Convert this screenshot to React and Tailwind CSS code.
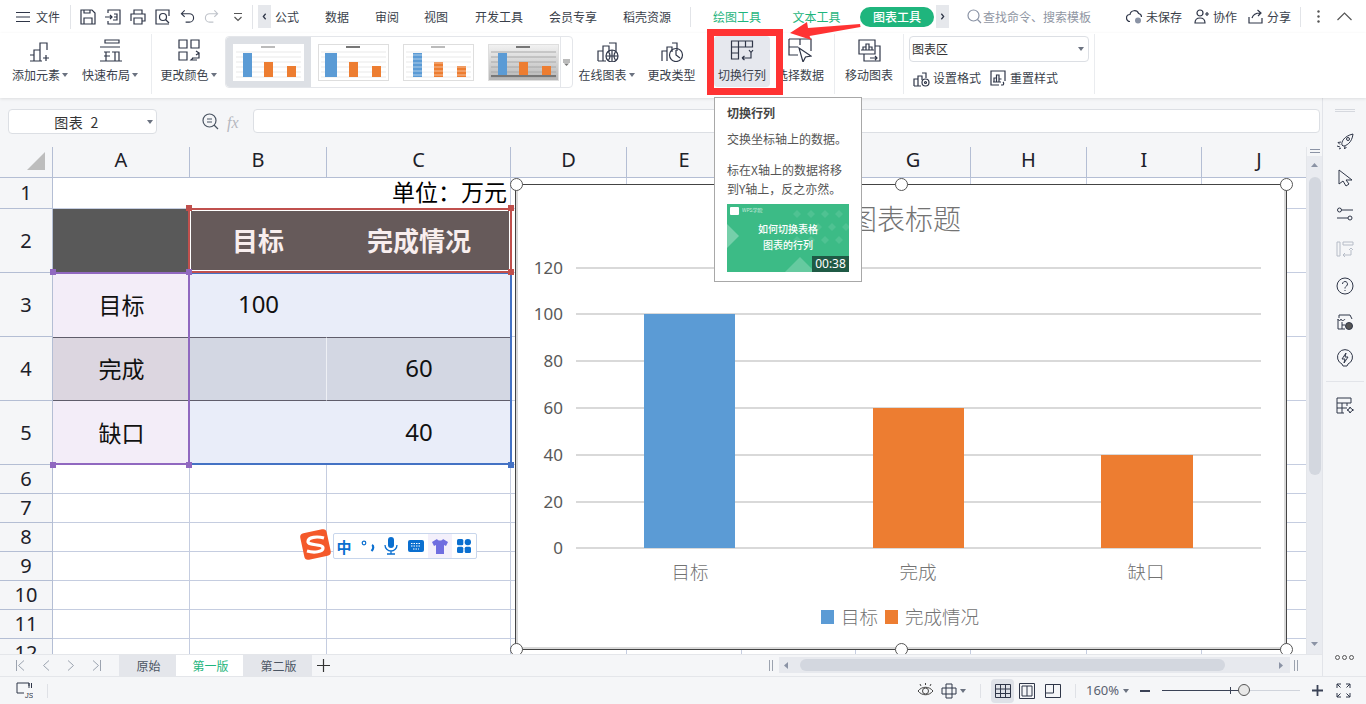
import React from "react";

const I = ({ s = 24, w, h, c = "#2f3648", sw = 1.2, vb = "0 0 24 24", children, cls = "" }) => (
  <svg width={w || s} height={h || s} viewBox={vb} fill="none" stroke={c} strokeWidth={sw} className={"shrink-0 " + cls}>{children}</svg>
);

const Caret = ({ c = "#6b7280" }) => (
  <svg width="6" height="4" viewBox="0 0 6 4" className="shrink-0"><path d="M0 0h6L3 4z" fill={c} /></svg>
);

const Tab = ({ w, children, cls = "text-[#3a3f4b]" }) => (
  <div className={"flex items-center justify-center text-xs shrink-0 " + cls} style={{ width: w }}>{children}</div>
);

const Sep = ({ h = "h-[60px]" }) => <div className={"w-px bg-[#eaecef] shrink-0 " + h} />;

const RibbonBtn = ({ w, label, caret, icon, active }) => (
  <div className={"flex flex-col items-center shrink-0 h-[51px] mt-[3px] rounded-sm " + (active ? "bg-[#e6e8ee]" : "")} style={{ width: w }}>
    <div className="h-[26px] flex items-end justify-center">{icon}</div>
    <div className="mt-[6px] flex items-center gap-[2px] text-xs text-[#3a3f4b] whitespace-nowrap leading-[14px]">
      {label}{caret && <Caret />}
    </div>
  </div>
);

const Thumb = ({ variant }) => {
  const gray = variant === 3;
  const blue = "#5b9bd5", or = "#ed7d31";
  return (
    <svg width="71" height="37" viewBox="0 0 71 37" className="shrink-0">
      <defs>
        <linearGradient id="tg" x1="0" y1="0" x2="0" y2="1"><stop offset="0" stopColor="#f2f2f2" /><stop offset="1" stopColor="#b5b5b5" /></linearGradient>
      </defs>
      <rect x="0.5" y="0.5" width="70" height="36" fill={gray ? "url(#tg)" : "#fff"} stroke={variant === 0 ? "#fff" : "#dedede"} />
      <rect x="28" y="2" width="14" height="2" fill={gray || variant === 1 ? "#777" : "#bbb"} />
      {[8, 13, 18, 23, 28, 33].map((y) => <line key={y} x1="3" x2="68" y1={y} y2={y} stroke={gray ? "#a8a8a8" : "#e9e9e9"} />)}
      <rect x={variant === 1 ? 7 : 10} y="9" width={variant === 1 ? 12 : 9} height="24" fill={blue} />
      <rect x="31" y="18" width="9" height="15" fill={or} />
      <rect x="54" y="22" width="9" height="11" fill={or} />
      {variant === 2 && [11, 15, 19, 23, 27, 31].map((y) => <line key={y} x1="8" x2="64" y1={y} y2={y} stroke="#fff" strokeOpacity=".5" />)}
      {gray && <rect x="3" y="31" width="65" height="2" fill="#777" />}
    </svg>
  );
};

const COLS = "grid-cols-[53px_137px_137px_184px_116px_115px_114px_115px_116px_115px_115px]";
const line = "border-r border-b border-[#c5cde0]";
const hdr = "bg-[#f5f6f8] flex items-center justify-center text-[20px] text-[#1d2129] font-['Noto_Sans',sans-serif] border-r border-b border-[#b4bed4] leading-none";

const Handle = ({ x, y }) => (
  <div className="absolute w-[13px] h-[13px] rounded-full bg-white border border-[#555]" style={{ left: x - 6, top: y - 6 }} />
);
const Sq = ({ x, y, c }) => (
  <div className="absolute w-[6px] h-[6px]" style={{ left: x - 3, top: y - 3, background: c }} />
);

const Empty = ({ n }) => Array.from({ length: 10 }).map((_, i) => <div key={n + "-" + i} className={line} />);

export default function App() {
  const t = 147;
  return (
    <div className="relative w-[1366px] h-[704px] overflow-hidden bg-[#f5f6f8] flex flex-col font-['Noto_Sans_CJK_SC','Noto_Sans',sans-serif]">
      {/* title row */}
      <div className="h-[33px] bg-white flex items-center shrink-0">
        <div className="w-[16px]" />
        <I s={14} vb="0 0 14 14"><path d="M0 2.5h14M0 7h14M0 11.5h14" /></I>
        <span className="ml-[6px] text-xs text-[#3a3f4b] w-[24px]">文件</span>
        <div className="w-px h-[24px] bg-[#e2e4e8] ml-[10px] mr-[9px]" />
        <div className="flex items-center w-[172px] gap-[9px]">
          <I s={16} vb="0 0 16 16"><path d="M1 1h11l3 3v11H1zM4 15V9h8v6M4 1v3h6V1" /></I>
          <I s={16} vb="0 0 16 16"><path d="M3 4V1h12v14H3v-3M0 8h7M5 6l2 2-2 2M9 5h3v3H9M12 8v3H8" /></I>
          <I s={16} vb="0 0 16 16"><path d="M4 5V1h8v4M1 12V5h14v7h-3M4 9h8v6H4z" /></I>
          <I s={16} vb="0 0 16 16"><path d="M14 15H1V1h13v6" /><circle cx="8" cy="8" r="3.5" /><path d="M10.5 10.5L14 14" /></I>
          <I s={15} vb="0 0 16 16"><path d="M2 5h8a4.5 4.5 0 0 1 0 9H6M5 1.5L1.5 5 5 8.5" /></I>
          <I s={15} vb="0 0 16 16" c="#bfc3ca"><path d="M14 5H6a4.5 4.5 0 0 0 0 9h4M11 1.5L14.5 5 11 8.5" /></I>
          <I s={10} vb="0 0 10 10" c="#555" cls="ml-[5px]"><path d="M1 1.5h8M1.5 5L5 8.5 8.5 5" /></I>
        </div>
        <div className="w-px h-[24px] bg-[#e2e4e8] mr-[5px]" />
        <div className="w-[13px] h-[23px] bg-[#e6e8ec] flex items-center justify-center">
          <I s={7} vb="0 0 7 9" sw={1.6}><path d="M5 1L2 4.5 5 8" /></I>
        </div>
        <Tab w={32}>公式</Tab>
        <Tab w={50} cls="text-[#3a3f4b] ml-[9px]">数据</Tab>
        <Tab w={50}>审阅</Tab>
        <Tab w={48}>视图</Tab>
        <Tab w={78}>开发工具</Tab>
        <Tab w={70}>会员专享</Tab>
        <Tab w={78}>稻壳资源</Tab>
        <div className="w-px h-[20px] bg-[#e2e4e8] ml-[4px]" />
        <Tab w={92} cls="text-[#1fb57d]">绘图工具</Tab>
        <Tab w={67} cls="text-[#1fb57d]">文本工具</Tab>
        <div className="w-[74px] h-[20px] ml-[10px] rounded-full bg-[#1fb57d] text-white text-xs flex items-center justify-center font-medium">图表工具</div>
        <div className="w-[13px] h-[23px] ml-[2px] bg-[#e6e8ec] flex items-center justify-center">
          <I s={7} vb="0 0 7 9" sw={1.6}><path d="M2 1l3 3.5L2 8" /></I>
        </div>
        <I s={15} vb="0 0 15 15" c="#8a93a5" cls="ml-[18px]"><circle cx="6.5" cy="6.5" r="5.5" /><path d="M10.5 10.5L14 14" /></I>
        <span className="text-xs text-[#9096a3] ml-px w-[109px] whitespace-nowrap">查找命令、搜索模板</span>
        <I s={17} vb="0 0 17 17" cls="ml-[34px]"><path d="M4 13.5a3.5 3.5 0 0 1 0-7 4.5 4.5 0 0 1 8.6-1A3.5 3.5 0 0 1 15.5 9" /><circle cx="12" cy="12.5" r="3" fill="#8a93a5" stroke="none" /></I>
        <span className="text-xs text-[#3a3f4b] ml-[3px] w-[36px]">未保存</span>
        <I s={15} vb="0 0 15 15" cls="ml-[12px]"><circle cx="6" cy="4" r="3" /><path d="M1 14c0-4 2-5 5-5s5 1 5 5zM11 5h4M13 3v4" /></I>
        <span className="text-xs text-[#3a3f4b] ml-[4px] w-[24px]">协作</span>
        <I s={15} vb="0 0 15 15" cls="ml-[11px]"><path d="M1 8v6h13V9M4 9c1-3 4-5 8-5M9.5 1L13 4l-3 3" /></I>
        <span className="text-xs text-[#3a3f4b] ml-[4px] w-[24px]">分享</span>
        <div className="w-px h-[20px] bg-[#e2e4e8] ml-[9px]" />
        <I w={3} h={13} vb="0 0 3 13" sw={0} cls="ml-[16px]"><circle cx="1.5" cy="1.5" r="1.2" fill="#555" /><circle cx="1.5" cy="6.5" r="1.2" fill="#555" /><circle cx="1.5" cy="11.5" r="1.2" fill="#555" /></I>
        <I w={15} h={9} vb="0 0 15 9" c="#555" cls="ml-[17px]"><path d="M.5 8L7.5 1l7 7" /></I>
      </div>

      {/* ribbon */}
      <div className="h-[65px] bg-white flex items-start shrink-0 relative z-10 shadow-[0_1px_3px_rgba(0,0,0,0.10)]">
        <div className="w-[5px]" />
        <RibbonBtn w={70} caret label="添加元素" icon={<I><path d="M6 23V12h6v11M12 12V5h7v7M2 23h12M2 17h4M18 17v6M15 20h6" /></I>} />
        <RibbonBtn w={70} caret label="快速布局" icon={<I><path d="M7 2h14v3H7zM2 9h20M2 23h22M6 14h6M6 18h6M8 14v9M14 14h7v9M17 14v9" /></I>} />
        <div className="ml-[6px] mt-[1px]"><Sep /></div>
        <RibbonBtn w={73} caret label="更改颜色" icon={<I><path d="M2 2h8v8H2zM14 2h8v8h-8zM2 14h8v8H2zM15 20h7v-5M19 13l3 2-3 2M20 22h-6l2-2" /></I>} />
        <div className="mt-[3px] w-[348px] h-[52px] border border-[#e4e6ea] rounded-sm flex items-center">
          <div className="w-[85px] h-full bg-[#dde0e5] flex items-center justify-center rounded-l-sm"><Thumb variant={0} /></div>
          <div className="w-[7px]" /><Thumb variant={1} />
          <div className="w-[14px]" /><Thumb variant={2} />
          <div className="w-[14px]" /><Thumb variant={3} />
          <div className="ml-auto w-[12px] h-full border-l border-[#e4e6ea] flex items-center justify-center">
            <I s={7} vb="0 0 7 7" c="#777" sw={1}><path d="M0 1h7M0 3h7" /><path d="M1 4.5h5L3.5 7z" fill="#777" stroke="none" /></I>
          </div>
        </div>
        <RibbonBtn w={67} caret label="在线图表" icon={<I><path d="M3 23V13h5M8 23V8h6v6M14 5h7v8M3 23h8" /><circle cx="17" cy="18" r="6" /><path d="M11 18h12M17 12v12M13.5 14c2 2 2 6 0 8M20.5 14c-2 2-2 6 0 8" /></I>} />
        <RibbonBtn w={63} label="更改类型" icon={<I><path d="M2 23V13h5v10M7 23V9h5v5M12 5h5v8" /><circle cx="16" cy="17" r="6.5" /><path d="M16 12v5l4 3" /></I>} />
        <div className="w-[11px]" />
        <RibbonBtn w={56} active label="切换行列" icon={<I><path d="M1.500 3h21v6h-21zM1.500 9h7v12h-7zM1.500 15h7M8.500 3v6M15.500 3v6M12 20h9v-5M19 12l2 2.500 2-2.500M12 20l2.500-2M12 20l2.500 2" /></I>} />
        <RibbonBtn w={60} label="选择数据" icon={<I><path d="M1 1h22v12M1 1v16h9M1 9h9M12 1v6" /><path d="M11 10l12 8-5.500 1-2.500 5z" /></I>} />
        <div className="mt-[1px] ml-[4px]"><Sep /></div>
        <RibbonBtn w={68} label="移动图表" icon={<I><path d="M2 2h16v14H2zM18 8h5v15H7v-7M6 12V9h3v3M9 12V6h3v6M12 12V9h3v3M4 12h13M13 20h7M18 18l2 2-2 2" /></I>} />
        <div className="mt-[1px]"><Sep /></div>
        <div className="ml-[5px] w-[185px] flex flex-col">
          <div className="mt-[3px] w-[180px] h-[26px] rounded-sm border border-[#dcdfe4] flex items-center justify-between pl-[2px] pr-[4px] text-xs text-[#333]">
            <span>图表区</span><Caret />
          </div>
          <div className="mt-[6px] flex items-center text-xs text-[#3a3f4b] h-[20px]">
            <I s={17} vb="0 0 17 17" cls="ml-[4px]"><path d="M1 16V9h4v7M5 16V6h4v4M9 3h4v5M1 16h7" /><circle cx="12.5" cy="12.5" r="3.5" /><circle cx="12.5" cy="12.5" r="1" /></I>
            <span className="ml-[3px] w-[48px]">设置格式</span>
            <I s={16} vb="0 0 16 16" cls="ml-[9px]"><path d="M9 15H1V1h14v10M4 12V8h2.500v4M6.500 12V5H9v7M9 12V9h2.500M3 12h8" /><path d="M11 15h2a2 2 0 0 0 0-3" /></I>
            <span className="ml-[4px] whitespace-nowrap">重置样式</span>
          </div>
        </div>
        <div className="mt-[1px]"><Sep /></div>
      </div>

      {/* body */}
      <div className="flex h-[578px] shrink-0">
        <div className="w-[1322px] flex flex-col">
          {/* formula bar */}
          <div className="h-[49px] shrink-0 flex items-start pt-[11px] pl-[8px] pr-[2px]">
            <div className="relative w-[149px] h-[25px] bg-white border border-[#dcdfe4] rounded-sm flex items-center justify-center text-sm text-[#333] tracking-[0.5px]">
              <span className="-ml-[12px] whitespace-pre">图表  2</span>
              <span className="absolute right-[3px] top-[10px]"><Caret /></span>
            </div>
            <I s={17} vb="0 0 17 17" c="#4b5563" cls="ml-[45px] mt-[4px]"><circle cx="7.500" cy="7.500" r="6.500" /><path d="M12 12l4 4M5 6h5M5 9h5" /></I>
            <span className="ml-[8px] mt-[2px] text-[16px] italic text-[#b5b8bf] font-['Liberation_Serif',serif] w-[19px]">fx</span>
            <div className="ml-[7px] flex-1 h-[24px] bg-white border border-[#dcdfe4] rounded-sm" />
          </div>
          {/* sheet */}
          <div className="flex h-[507px] shrink-0">
            <div className="relative w-[1306px] overflow-hidden bg-white">
              <div className={"grid " + COLS + " grid-rows-[31px_31px_64px_64px_64px_64px_29px_29px_29px_29px_29px_29px_29px]"}>
                <div className="bg-[#f5f6f8] border-r border-b border-[#b4bed4] relative">
                  <svg width="18" height="18" viewBox="0 0 18 18" className="absolute left-[27px] top-[5px]"><path d="M18 0v18H0z" fill="#bdbdbd" /></svg>
                </div>
                {["A", "B", "C", "D", "E", "", "G", "H", "I", "J"].map((c, i) => <div key={i} className={hdr + " pb-[4px]"}>{c}</div>)}

                <div className={hdr}>1</div>
                <div className="col-span-3 flex items-center justify-end pr-[3px] pb-[3px] text-[23px] text-black border-b border-r border-[#c5cde0] leading-none whitespace-nowrap">单位：万元</div>
                {Array.from({ length: 7 }).map((_, i) => <div key={i} className={line} />)}

                <div className={hdr}>2</div>
                <div className="bg-[#595959]" />
                <div className="bg-[#665a5a] flex items-center justify-center pb-[2px] pr-[1px] text-[26px] font-bold text-[#f8eeee] leading-none">目标</div>
                <div className="bg-[#665a5a] flex items-center justify-center pb-[2px] text-[26px] font-bold text-[#f8eeee] leading-none">完成情况</div>
                {Array.from({ length: 7 }).map((_, i) => <div key={i} className={line} />)}

                <div className={hdr}>3</div>
                <div className="bg-[#f3edf8] flex items-center justify-center pb-[2px] text-[23px] text-[#111]">目标</div>
                <div className="bg-[#e9edf9] flex items-center justify-center pb-[2px] text-[24px] text-[#111] font-['Noto_Sans',sans-serif]">100</div>
                <div className="bg-[#e9edf9]" />
                {Array.from({ length: 7 }).map((_, i) => <div key={i} className={line} />)}

                <div className={hdr}>4</div>
                <div className="bg-[#dcd6e0] border-y border-[#5f5d6b] flex items-center justify-center pb-[2px] text-[23px] text-[#111]">完成</div>
                <div className="bg-[#d3d7e3] border-y border-r border-y-[#5f5d6b] border-r-[#eef0f5]" />
                <div className="bg-[#d3d7e3] border-y border-[#5f5d6b] flex items-center justify-center pb-[2px] text-[24px] text-[#111] font-['Noto_Sans',sans-serif]">60</div>
                {Array.from({ length: 7 }).map((_, i) => <div key={i} className={line} />)}

                <div className={hdr}>5</div>
                <div className="bg-[#f3edf8] flex items-center justify-center pb-[2px] text-[23px] text-[#111]">缺口</div>
                <div className="bg-[#e9edf9]" />
                <div className="bg-[#e9edf9] flex items-center justify-center pb-[2px] text-[24px] text-[#111] font-['Noto_Sans',sans-serif]">40</div>
                {Array.from({ length: 7 }).map((_, i) => <div key={i} className={line} />)}

                {[6, 7, 8, 9, 10, 11, 12].map((n) => (
                  <React.Fragment key={n}>
                    <div className={hdr}>{n}</div>
                    <Empty n={n} />
                  </React.Fragment>
                ))}
              </div>

              {/* selection frames */}
              <div className="absolute left-[53px] top-[125px] w-[137px] h-[193px] border-2 border-l-0 border-[#9068c0]" />
              <div className="absolute left-[190px] top-[125px] w-[322px] h-[193px] border-2 border-l-0 border-[#4472c4]" />
              <div className="absolute left-[188px] top-[61px] w-[324px] h-[65px] border-2 border-[#c0504d]">
                <div className="w-full h-full border border-white" />
              </div>
              <Sq x={189} y={208 - t} c="#c0504d" />
              <Sq x={511} y={208 - t} c="#c0504d" />
              <Sq x={511} y={272 - t} c="#c0504d" />
              <Sq x={53} y={272 - t} c="#9068c0" />
              <Sq x={189} y={272 - t} c="#9068c0" />
              <Sq x={53} y={465 - t} c="#9068c0" />
              <Sq x={189} y={465 - t} c="#9068c0" />
              <Sq x={511} y={465 - t} c="#4472c4" />

              {/* chart object */}
              <div className="absolute left-[515px] top-[37px] w-[772px] h-[466px] border border-[#444] bg-white">
                <div className="w-full h-full border-2 border-[#d9d9d9] border-t-0">
                  <svg width="772" height="466" viewBox="515 184 772 466" className="absolute left-[-1px] top-[-1px]">
                    {[268, 314, 361, 408, 455, 502, 548].map((y) => <line key={y} x1="576" x2="1261" y1={y} y2={y} stroke="#d9d9d9" strokeWidth="2" />)}
                    {[["120", 268], ["100", 314], ["80", 361], ["60", 408], ["40", 455], ["20", 502], ["0", 548]].map(([l, y]) => (
                      <text key={l} x="563" y={y + 6} textAnchor="end" fontSize="17" fill="#595959" fontFamily="Noto Sans, sans-serif">{l}</text>
                    ))}
                    <rect x="644" y="314" width="91" height="234" fill="#5b9bd5" />
                    <rect x="873" y="408" width="91" height="140" fill="#ed7d31" />
                    <rect x="1101" y="455" width="92" height="93" fill="#ed7d31" />
                    <text x="905" y="230" textAnchor="middle" fontSize="28" fill="#737373" fontWeight="300">图表标题</text>
                    {[["目标", 690], ["完成", 918], ["缺口", 1146]].map(([l, x]) => (
                      <text key={l} x={x} y="579" textAnchor="middle" fontSize="18.500" fill="#737373" fontWeight="300">{l}</text>
                    ))}
                    <rect x="821" y="610" width="13" height="14" fill="#5b9bd5" />
                    <text x="841" y="624" fontSize="18.500" fill="#737373" fontWeight="300">目标</text>
                    <rect x="885" y="610" width="13" height="14" fill="#ed7d31" />
                    <text x="905" y="624" fontSize="18.500" fill="#737373" fontWeight="300">完成情况</text>
                  </svg>
                </div>
              </div>
              <Handle x={516} y={184 - t} />
              <Handle x={901} y={184 - t} />
              <Handle x={1286} y={184 - t} />
              <Handle x={516} y={649 - t} />
              <Handle x={901} y={649 - t} />
              <Handle x={1286} y={649 - t} />

              {/* IME bar */}
              <div className="absolute left-[333px] top-[386px] w-[144px] h-[26px] bg-white border border-[#c8d6ec] rounded-[2px] flex items-center">
                <span className="w-[20px] text-center text-[15px] font-bold text-[#0a6fd0] leading-none">中</span>
                <svg width="20" height="14" viewBox="0 0 20 14" className="ml-[4px]"><circle cx="6" cy="4" r="1.800" fill="none" stroke="#0a6fd0" strokeWidth="1.200" /><path d="M14 6c2 1 1.500 4-.5 6" stroke="#0a6fd0" strokeWidth="2.200" fill="none" /></svg>
                <svg width="14" height="18" viewBox="0 0 14 18" className="ml-[6px]"><rect x="4" y="0" width="6" height="11" rx="3" fill="#0a6fd0" /><path d="M1 8a6 6 0 0 0 12 0M7 14v3M3 17h8" stroke="#0a6fd0" strokeWidth="1.300" fill="none" /></svg>
                <svg width="16" height="13" viewBox="0 0 16 13" className="ml-[10px]"><rect width="16" height="12" rx="2" fill="#0a6fd0" /><path d="M3 3.500h10M3 6h10M5 9h6" stroke="#fff" strokeWidth="1.200" strokeDasharray="1.500 1" /></svg>
                <div className="ml-[4px] w-[24px] h-[24px] bg-[#f3f0fb] flex items-center justify-center">
                  <svg width="16" height="15" viewBox="0 0 16 15"><path d="M5 0L0 3l2 4 2-1v9h8V6l2 1 2-4-5-3c-1 2-5 2-6 0z" fill="#6f6ee0" /></svg>
                </div>
                <svg width="14" height="14" viewBox="0 0 14 14" className="ml-[5px]" fill="#0a6fd0"><rect width="6.300" height="6.300" rx="1.500" /><rect x="7.700" width="6.300" height="6.300" rx="3" /><rect y="7.700" width="6.300" height="6.300" rx="1.500" /><rect x="7.700" y="7.700" width="6.300" height="6.300" rx="1.500" /></svg>
              </div>
              <svg width="31" height="31" viewBox="0 0 31 31" className="absolute left-[300px] top-[382px]">
                <rect x="2" y="2" width="27" height="27" rx="4" fill="#f4592a" transform="rotate(-12 15.500 15.500)" />
                <path d="M24 9C17 7 8 8 8 12.500c0 4.500 15 2 15 6.500 0 4-9 5-16 3" stroke="#fff" strokeWidth="3.200" fill="none" />
              </svg>
            </div>
            {/* v scroll */}
            <div className="w-[16px] bg-[#f5f6f8] flex flex-col items-center border-l border-[#e4e6ea]">
              <svg width="10" height="4" viewBox="0 0 10 4" className="mt-[2px] shrink-0"><path d="M0 .5h10M0 3.500h10" stroke="#8b93a5" /></svg>
              <div className="mt-[3px] flex-1 w-full bg-[#e9ebf0] flex flex-col items-center">
                <svg width="7" height="4" viewBox="0 0 7 4" className="mt-[7px] shrink-0"><path d="M3.500 0L7 4H0z" fill="#8b93a5" /></svg>
                <div className="mt-[10px] w-[12px] h-[298px] rounded-full bg-[#d3d7df]" />
                <svg width="7" height="4" viewBox="0 0 7 4" className="mt-auto mb-[8px] shrink-0"><path d="M0 0h7L3.500 4z" fill="#8b93a5" /></svg>
              </div>
            </div>
          </div>
          {/* sheet tabs */}
          <div className="h-[22px] shrink-0 flex items-start border-t border-[#e4e6ea] bg-[#f5f6f8]">
            <div className="w-[119px] flex items-center h-[21px] pl-[16px] gap-[17px] shrink-0">
              <I w={9} h={11} vb="0 0 9 11" c="#9ca3af" sw={1}><path d="M.5 0v11M8 .5L2.500 5.500 8 10.500" /></I>
              <I w={8} h={11} vb="0 0 8 11" c="#9ca3af" sw={1}><path d="M7 .5L1.500 5.500 7 10.500" /></I>
              <I w={8} h={11} vb="0 0 8 11" c="#9ca3af" sw={1}><path d="M1 .5l5.500 5-5.500 5" /></I>
              <I w={9} h={11} vb="0 0 9 11" c="#9ca3af" sw={1}><path d="M8.500 0v11M1 .5l5.500 5-5.500 5" /></I>
            </div>
            <div className="w-[57px] h-[21px] bg-[#e4e6eb] flex items-center justify-center pl-[2px] text-xs text-[#4b5563] shrink-0">原始</div>
            <div className="w-[67px] h-[21px] bg-white flex items-center justify-center pl-[2px] text-xs text-[#1fb57d] shrink-0">第一版</div>
            <div className="w-[69px] h-[21px] bg-[#e4e6eb] flex items-center justify-center pl-[2px] text-xs text-[#4b5563] shrink-0">第二版</div>
            <I s={13} vb="0 0 13 13" c="#333" cls="ml-[5px] mt-[4px]"><path d="M6.500 0v13M0 6.500h13" /></I>
            <div className="ml-[439px] mt-[5px] w-[4px] h-[11px] border-x border-[#9ca3af] shrink-0" />
            <div className="ml-[6px] h-[16px] mt-[2px] w-[511px] bg-[#e7e9ee] flex items-center shrink-0">
              <svg width="4" height="7" viewBox="0 0 4 7" className="ml-[5px] shrink-0"><path d="M4 0v7L0 3.500z" fill="#8b93a5" /></svg>
              <div className="ml-[12px] w-[425px] h-[12px] rounded-full bg-[#d3d7df] shrink-0" />
              <svg width="4" height="7" viewBox="0 0 4 7" className="ml-auto mr-[7px] shrink-0"><path d="M0 0v7l4-3.500z" fill="#8b93a5" /></svg>
            </div>
            <div className="ml-[4px] mt-[5px] w-[4px] h-[11px] border-x border-[#9ca3af] shrink-0" />
          </div>
        </div>
        {/* right rail */}
        <div className="w-[44px] border-l border-[#e2e4e9] flex flex-col items-center bg-[#f5f6f8]">
          <div className="mt-[11px] w-[20px] h-[3px] border-y border-[#d5d8de]" />
          <I s={18} vb="0 0 18 18" cls="mt-[21px]" sw={1}><path d="M6 12c-1-3 2-9 11-11-1 9-7 12-10 12zM5 9l-3 .5 2 2M9 13l-.5 3 2-2M1 13l3 1M3 16l2-1" /><circle cx="12" cy="6" r="1.500" /></I>
          <I s={18} vb="0 0 18 18" cls="mt-[18px]" sw={1}><path d="M3 1v14l4-3 3 5 3-2-3-4h6z" /></I>
          <I s={18} vb="0 0 18 18" cls="mt-[18px]" sw={1}><circle cx="3.500" cy="5" r="2" /><path d="M5.500 5H17M1 13h11" /><circle cx="14" cy="13" r="2" /></I>
          <I s={18} vb="0 0 18 18" c="#b6bcc7" cls="mt-[18px]" sw={1}><path d="M1 1h3v14H1zM7 1h10v3H7zM7 14h8v-5M13 9l2-2 2 2M7 14l2-2M7 14l2 2" /></I>
          <I s={18} vb="0 0 18 18" cls="mt-[18px]" sw={1}><circle cx="9" cy="9" r="8" /><path d="M6.500 7a2.500 2.500 0 1 1 4 2c-1 .8-1.500 1.200-1.500 2.500M9 13v1" /></I>
          <I s={18} vb="0 0 18 18" cls="mt-[18px]" sw={1}><path d="M3 5V2h11l2 4M2 6c0 2 3 2 3 0 0 2 3 2 4 0M2 6v10h7M6 9v7M6 12h3" /><circle cx="13" cy="13" r="3.500" fill="#555" /></I>
          <I s={18} vb="0 0 18 18" cls="mt-[18px]" sw={1}><path d="M6 15a7.500 7.500 0 1 1 6 0l-1 2H7zM10 4l-4 6h3l-1 4 4-6H9z" /></I>
          <div className="mt-[14px] w-[38px] h-px bg-[#e2e4e9]" />
          <I s={18} vb="0 0 18 18" cls="mt-[15px]" sw={1}><path d="M1 1h14v5H1zM1 6v10h7M6 6v10M1 11h10M11 6v3M14 10l1.500 2 2 1-2 1-1.500 2-1-2-2-1 2-1z" /></I>
          <div className="mt-auto mb-[16px] flex gap-[2px]">
            <span className="w-[5px] h-[5px] rounded-full border border-[#555]" />
            <span className="w-[5px] h-[5px] rounded-full border border-[#555]" />
            <span className="w-[5px] h-[5px] rounded-full border border-[#555]" />
          </div>
        </div>
      </div>

      {/* status bar */}
      <div className="h-[28px] shrink-0 flex items-center border-t border-[#e4e6ea] bg-[#f5f6f8]">
        <svg width="17" height="17" viewBox="0 0 17 17" fill="none" stroke="#2f3648" className="ml-[16px] shrink-0">
          <path d="M8 11H1V1h12v3M13 1v5M15.500 1v5" />
          <text x="9" y="15.500" fontSize="7" fill="#2f3648" stroke="none" fontStyle="italic" fontFamily="Liberation Sans, sans-serif">JS</text>
        </svg>
        <div className="w-px h-[14px] bg-[#dfe1e6] ml-[14px]" />
        <I s={17} vb="0 0 17 17" cls="ml-[869px]" c="#444" sw={1}><path d="M1 9c4-5 11-5 15 0-4 5-11 5-15 0z" /><circle cx="8.500" cy="9" r="3" /><path d="M8.500 1v2M3 2l1 2M14 2l-1 2" /></I>
        <I s={16} vb="0 0 16 16" cls="ml-[7px]" sw={1}><path d="M5 1h6v4h4v6h-4v4H5v-4H1V5h4zM5 5h6v6H5z" /></I>
        <span className="ml-[3px]"><Caret /></span>
        <div className="w-px h-[14px] bg-[#dfe1e6] ml-[14px]" />
        <div className="ml-[10px] w-[23px] h-[24px] rounded-sm bg-[#dfe2e8] flex items-center justify-center">
          <I s={16} vb="0 0 16 16" sw={1}><path d="M.5 1.500h15v13H.5zM.5 6h15M.5 10.500h15M5.500 1.500v13M10.500 1.500v13" /></I>
        </div>
        <I s={16} vb="0 0 16 16" cls="ml-[5px]" sw={1}><path d="M.5.500h15v15H.5zM3 3h10v10H3zM8 3v10" /></I>
        <I s={16} vb="0 0 16 16" cls="ml-[10px]" sw={1}><path d="M.5 1.500h15v13H.5zM.5 10h8V1.500" /></I>
        <div className="w-px h-[14px] bg-[#dfe1e6] ml-[14px]" />
        <span className="ml-[10px] text-[13px] text-[#5a6270] font-['Noto_Sans',sans-serif]">160%</span>
        <span className="ml-[4px]"><Caret /></span>
        <div className="ml-[11px] w-[10px] h-[2px] bg-[#3a4256]" />
        <div className="relative ml-[12px] w-[138px] h-px bg-[#d0d4dc]">
          <div className="absolute left-0 top-0 w-[80px] h-px bg-[#3a4256]" />
          <div className="absolute left-[68px] -top-[3px] w-px h-[7px] bg-[#3a4256]" />
          <div className="absolute left-[76px] -top-[6px] w-[12px] h-[12px] rounded-full bg-[#e8e8e8] border border-[#555]" />
        </div>
        <I s={11} vb="0 0 11 11" sw={1.800} c="#3a4256" cls="ml-[12px]"><path d="M5.500 0v11M0 5.500h11" /></I>
        <I s={15} vb="0 0 15 15" sw={1} cls="ml-[13px]"><path d="M1 5V1h4M10 1h4v4M14 10v4h-4M5 14H1v-4M1 1l3.500 3.500M14 1l-3.500 3.500M14 14l-3.500-3.500M1 14l3.500-3.500" /></I>
      </div>

      {/* annotations over the ribbon */}
      <div className="absolute left-[707px] top-[29px] w-[76px] h-[66px] border-[7px] border-[#ff3333] z-20" />
      <svg width="80" height="22" viewBox="0 0 80 22" className="absolute left-[788px] top-[20px] z-20">
        <path d="M2 13L19 2l1 6 52-4 .500 3-51 9 2 4z" fill="#ff3333" />
      </svg>

      {/* tooltip */}
      <div className="absolute left-[714px] top-[97px] w-[148px] h-[185px] bg-white border border-[#a8a8a8] z-30 pl-[12px] pt-[6px] text-xs text-[#555] leading-[17px]">
        <div className="font-bold text-[#444]">切换行列</div>
        <div className="mt-[9px] whitespace-nowrap">交换坐标轴上的数据。</div>
        <div className="mt-[13px] whitespace-nowrap leading-[19px]">标在X轴上的数据将移<br />到Y轴上，反之亦然。</div>
        <div className="relative mt-[6px] w-[122px] h-[68px] bg-[#3cbb86] overflow-hidden text-white text-center">
          <svg width="122" height="68" viewBox="0 0 122 68" className="absolute inset-0">
            <rect x="3" y="3" width="9" height="8" rx="1" fill="#fff" />
            <path d="M0 20l12 12L0 44z" fill="#fff" opacity=".3" />
            <path d="M58 68l15-15 15 15z" fill="#fff" opacity=".22" />
            {[0, 1, 2, 3, 4, 5, 6, 7, 8, 9, 10, 11].map((i) => <path key={i} d={`M${70 + (i % 4) * 14 + ((i >> 2) % 2) * 7} ${6 + (i >> 2) * 13}l4 4-4 4-4-4z`} fill="#fff" opacity=".1" />)}
          </svg>
          <div className="absolute left-[15px] top-[2px] text-[5px] leading-[7px] opacity-70">WPS学院</div>
          <div className="relative pt-[17px] text-[10px] font-medium leading-[16px]">如何切换表格<br />图表的行列</div>
          <div className="absolute right-0 bottom-0 w-[37px] h-[16px] bg-[#1f5a45] text-[12px] leading-[16px] font-['Noto_Sans',sans-serif] text-white">00:38</div>
        </div>
      </div>
    </div>
  );
}
